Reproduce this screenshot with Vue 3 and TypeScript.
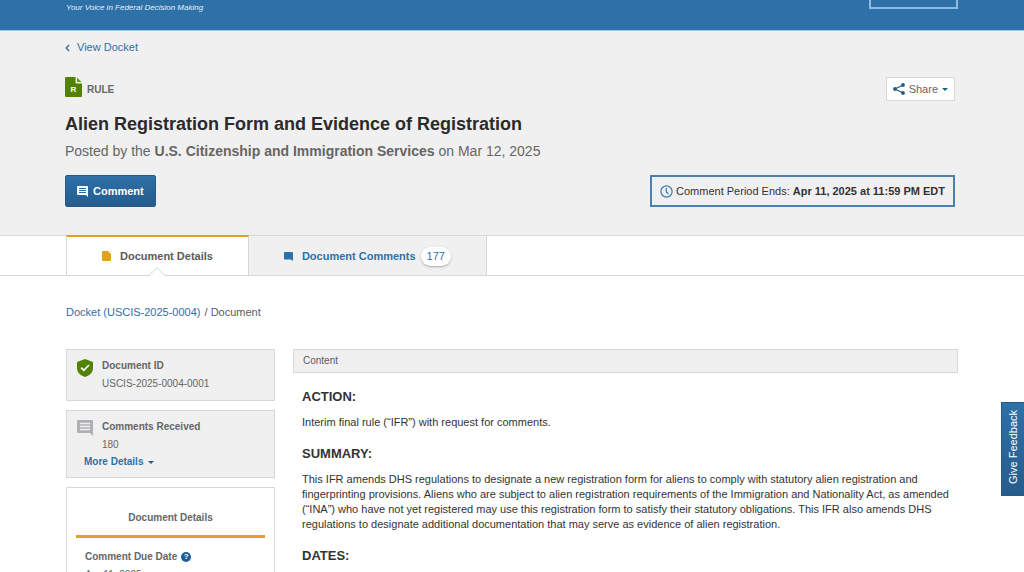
<script setup lang="ts">
interface Section {
  heading: string
  body: string
}

const sections: Section[] = [
  { heading: 'ACTION:', body: 'Interim final rule (“IFR”) with request for comments.' },
  {
    heading: 'SUMMARY:',
    body: 'This IFR amends DHS regulations to designate a new registration form for aliens to comply with statutory alien registration and fingerprinting provisions. Aliens who are subject to alien registration requirements of the Immigration and Nationality Act, as amended (“INA”) who have not yet registered may use this registration form to satisfy their statutory obligations. This IFR also amends DHS regulations to designate additional documentation that may serve as evidence of alien registration.',
  },
  { heading: 'DATES:', body: '' },
]
</script>

<template>
  <div class="page">
    <header class="topbar">
      <span class="tagline">Your Voice in Federal Decision Making</span>
      <div class="topbar-box"></div>
    </header>

    <section class="hero">
      <a class="back" href="#docket">
        <svg width="5" height="8" viewBox="0 0 5 8"><path d="M4 1 1.2 4 4 7" fill="none" stroke="#3f6c94" stroke-width="1.4" /></svg>
        View Docket
      </a>

      <div class="row type-row">
        <div class="doc-type">
          <span class="doc-icon">
            <svg width="17" height="20" viewBox="0 0 17 20">
              <path d="M1 0h9.500v6.500H17V19a1 1 0 0 1-1 1H1a1 1 0 0 1-1-1V1a1 1 0 0 1 1-1z" fill="#538200" />
              <path d="M12 .5 16.500 5H12z" fill="#6c9c26" />
            </svg>
            <b>R</b>
          </span>
          <strong>RULE</strong>
        </div>
        <button class="share" type="button">
          <svg width="12" height="12" viewBox="0 0 12 12">
            <path d="M10 2 2 6l8 4" fill="none" stroke="#205d88" stroke-width="1.2" />
            <circle cx="10" cy="2" r="1.9" fill="#205d88" />
            <circle cx="2" cy="6" r="1.9" fill="#205d88" />
            <circle cx="10" cy="10" r="1.9" fill="#205d88" />
          </svg>
          Share
          <svg width="6" height="3" viewBox="0 0 6 3"><path d="M0 0h6L3 3z" fill="#205d88" /></svg>
        </button>
      </div>

      <h1>Alien Registration Form and Evidence of Registration</h1>
      <p class="posted">Posted by the <strong>U.S. Citizenship and Immigration Services</strong> on Mar 12, 2025</p>

      <div class="row">
        <button class="comment" type="button">
          <svg width="11" height="11" viewBox="0 0 11 11">
            <path d="M1 0h9a1 1 0 0 1 1 1v10L9 9H1a1 1 0 0 1-1-1V1a1 1 0 0 1 1-1z" fill="#fff" />
            <path d="M2 2.500h7M2 4.500h7M2 6.500h7" stroke="#2a6aa3" />
          </svg>
          Comment
        </button>
        <div class="period">
          <svg width="13" height="13" viewBox="0 0 13 13" fill="none" stroke="#3a7ab0" stroke-width="1.2">
            <circle cx="6.5" cy="6.5" r="5.6" /><path d="M6.300 3v3.700l2 2.300" />
          </svg>
          <span>Comment Period Ends:</span>
          <strong>Apr 11, 2025 at 11:59 PM EDT</strong>
        </div>
      </div>
    </section>

    <nav class="tabs">
      <a class="tab active" href="#details">
        <svg width="9" height="10" viewBox="0 0 9 10"><path d="M1 0h5l3 3v6a1 1 0 0 1-1 1H1a1 1 0 0 1-1-1V1a1 1 0 0 1 1-1z" fill="#e0a31b" /></svg>
        <span>Document Details</span>
        <svg class="notch" width="16" height="9" viewBox="0 0 16 9"><path d="M0 8.500 8 .7l8 7.800" fill="#fff" stroke="#d6d7d9" /><path d="M1 8.500h14" stroke="#fff" /></svg>
      </a>
      <a class="tab" href="#comments">
        <svg width="9" height="9" viewBox="0 0 9 9"><path d="M1 0h7a1 1 0 0 1 1 1v8L7 7.500H1a1 1 0 0 1-1-1V1a1 1 0 0 1 1-1z" fill="#2e70a8" /></svg>
        <span>Document Comments</span>
        <span class="count">177</span>
      </a>
    </nav>

    <main>
      <div class="crumbs"><a href="#docket">Docket (USCIS-2025-0004)</a><span>/ Document</span></div>

      <div class="columns">
        <aside>
          <div class="card">
            <svg class="card-icon" width="16" height="18" viewBox="0 0 16 18">
              <path d="M8 0 16 3v6c0 4-3 7.500-8 9-5-1.500-8-5-8-9V3z" fill="#538200" />
              <path d="m4.200 8.700 2.600 2.600L12 6" fill="none" stroke="#fff" stroke-width="1.7" />
            </svg>
            <div class="card-text"><strong>Document ID</strong><span>USCIS-2025-0004-0001</span></div>
          </div>

          <div class="card">
            <svg class="card-icon" width="16" height="16" viewBox="0 0 16 16">
              <path d="M1 0h14a1 1 0 0 1 1 1v15l-3-3H1a1 1 0 0 1-1-1V1a1 1 0 0 1 1-1z" fill="#aeb0b5" />
              <path d="M3 3.500h10M3 6.500h10M3 9.500h10" stroke="#f0f0f0" stroke-width="1.7" />
            </svg>
            <div class="card-text"><strong>Comments Received</strong><span>180</span></div>
            <button class="more" type="button">
              More Details
              <svg width="6" height="3" viewBox="0 0 6 3"><path d="M0 0h6L3 3z" fill="#205d88" /></svg>
            </button>
          </div>

          <div class="details">
            <h2>Document Details</h2>
            <dl>
              <dt>
                Comment Due Date
                <span class="help">?</span>
              </dt>
              <dd>Apr 11, 2025</dd>
            </dl>
          </div>
        </aside>

        <article>
          <div class="content-head">Content</div>
          <section v-for="s in sections" :key="s.heading" class="block">
            <h3>{{ s.heading }}</h3>
            <p v-if="s.body">{{ s.body }}</p>
          </section>
        </article>
      </div>
    </main>

    <button class="feedback" type="button"><span>Give Feedback</span></button>
  </div>
</template>

<style>
body {
  margin: 0;
  background: #fff;
}
</style>

<style scoped>
.page {
  height: 100vh;
  overflow: hidden;
  font-family: "Liberation Sans", Arial, sans-serif;
  font-size: 11px;
  line-height: 15px;
  color: #333;
}
.page * {
  box-sizing: border-box;
}
a {
  color: #2e70a8;
  text-decoration: none;
}
button {
  font: inherit;
  cursor: pointer;
}
svg {
  flex: none;
  display: block;
}
.topbar {
  display: flex;
  justify-content: space-between;
  align-items: flex-start;
  height: 31px;
  padding: 0 66px;
  background: #2e70a8;
  border-bottom: 1px solid #9cc6e6;
}
.tagline {
  color: #e6f0f8;
  font-size: 8px;
  font-style: italic;
}
.topbar-box {
  width: 89px;
  height: 9px;
  border: 2px solid #8dbbe0;
  border-top: 0;
}
.hero {
  padding: 9px 69px 28px 65px;
  background: #f0f0f0;
}
.back {
  display: flex;
  align-items: center;
  gap: 7px;
}
.row {
  display: flex;
  justify-content: space-between;
  align-items: center;
}
.type-row {
  margin-top: 22px;
}
.doc-type {
  display: flex;
  align-items: center;
  gap: 5px;
  color: #666;
  font-size: 10px;
}
.doc-icon {
  display: grid;
  margin-bottom: 4px;
}
.doc-icon > * {
  grid-area: 1 / 1;
}
.doc-icon b {
  align-self: end;
  justify-self: center;
  color: #fff;
  font-size: 8px;
  line-height: 14px;
}
.share {
  display: flex;
  align-items: center;
  gap: 4px;
  height: 24px;
  padding: 0 6px;
  background: #fff;
  border: 1px solid #d6d7d9;
  color: #666;
}
h1 {
  margin: 10px 0 0;
  font-size: 18px;
  line-height: 26px;
  color: #2b2b2b;
}
.posted {
  margin: 4px 0 14px;
  font-size: 14px;
  line-height: 20px;
  color: #666;
}
.comment {
  display: flex;
  align-items: center;
  gap: 5px;
  height: 32px;
  padding: 0 11px;
  background: linear-gradient(#2e70a8, #265c8c);
  border: 1px solid #24598a;
  border-radius: 2px;
  color: #fff;
  font-weight: bold;
}
.period {
  display: flex;
  align-items: center;
  gap: 3px;
  height: 32px;
  padding: 0 8px;
  border: 2px solid #4a7fae;
}
.tabs {
  display: flex;
  height: 41px;
  padding: 0 66px;
  border-top: 1px solid #d6d7d9;
  border-bottom: 1px solid #d6d7d9;
}
.tab {
  position: relative;
  display: flex;
  align-items: center;
  gap: 9px;
  padding: 2px 35px 0;
  background: #f0f0f0;
  border-right: 1px solid #d6d7d9;
  font-weight: bold;
}
.tab.active {
  margin-top: -1px;
  padding-top: 0;
  background: #fff;
  border-top: 2px solid #e0a31b;
  border-left: 1px solid #d6d7d9;
  color: #5b5b5b;
}
.notch {
  position: absolute;
  bottom: -1px;
  left: calc(50% - 8px);
}
.count {
  margin-left: -4px;
  padding: 2px 6px;
  border-radius: 10px;
  background: #fff;
  box-shadow: 0 1px 2px #aaa;
  color: #2e70a8;
  font-weight: normal;
}
main {
  padding: 29px 66px 0;
}
.crumbs {
  display: flex;
  gap: 4px;
  color: #5b5b5b;
}
.columns {
  display: grid;
  grid-template-columns: 209px minmax(0, 1fr);
  gap: 18px;
  margin-top: 29px;
}
aside {
  display: flex;
  flex-direction: column;
  gap: 9px;
  color: #666;
}
.card {
  display: flex;
  flex-wrap: wrap;
  gap: 0 9px;
  padding: 7px 10px;
  background: #f0f0f0;
  border: 1px solid #d6d7d9;
}
.card-icon {
  margin-top: 2px;
}
.card-text {
  flex: 1 0 120px;
  font-size: 10px;
  line-height: 18px;
}
.card-text strong,
.card-text span {
  display: block;
}
.more {
  display: flex;
  align-items: center;
  gap: 5px;
  width: 100%;
  padding: 0 7px;
  background: none;
  border: 0;
  color: #2e70a8;
  font-size: 10px;
  line-height: 16px;
  font-weight: bold;
}
.details {
  padding: 21px 9px 0;
  border: 1px solid #d6d7d9;
}
.details h2 {
  margin: 0;
  padding-bottom: 8px;
  border-bottom: 3px solid #e0a31b;
  font-size: 10px;
  line-height: 18px;
  text-align: center;
}
dl {
  margin: 0;
  padding: 10px 9px;
  font-size: 10px;
  line-height: 18px;
}
dt {
  display: flex;
  align-items: center;
  gap: 4px;
  font-weight: bold;
}
dd {
  margin: 0;
}
.help {
  width: 10px;
  height: 10px;
  border-radius: 50%;
  background: #205d98;
  color: #fff;
  font-size: 8px;
  line-height: 10px;
  text-align: center;
}
.content-head {
  height: 24px;
  padding: 0 9px;
  background: #f0f0f0;
  border: 1px solid #d6d7d9;
  color: #5b5b5b;
  font-size: 10px;
  line-height: 22px;
}
.block {
  margin-top: 14px;
  padding-left: 9px;
}
h3 {
  margin: 0;
  font-size: 13px;
  font-weight: bold;
  line-height: 20px;
}
.block p {
  margin: 8px 0 0;
}
.feedback {
  position: fixed;
  right: 0;
  top: 402px;
  width: 23px;
  height: 94px;
  padding: 0;
  background: linear-gradient(#2e70a8, #265c8c);
  border: 1px solid #24598a;
  border-right: 0;
  color: #fff;
}
.feedback span {
  writing-mode: vertical-rl;
  transform: rotate(180deg);
}
</style>
